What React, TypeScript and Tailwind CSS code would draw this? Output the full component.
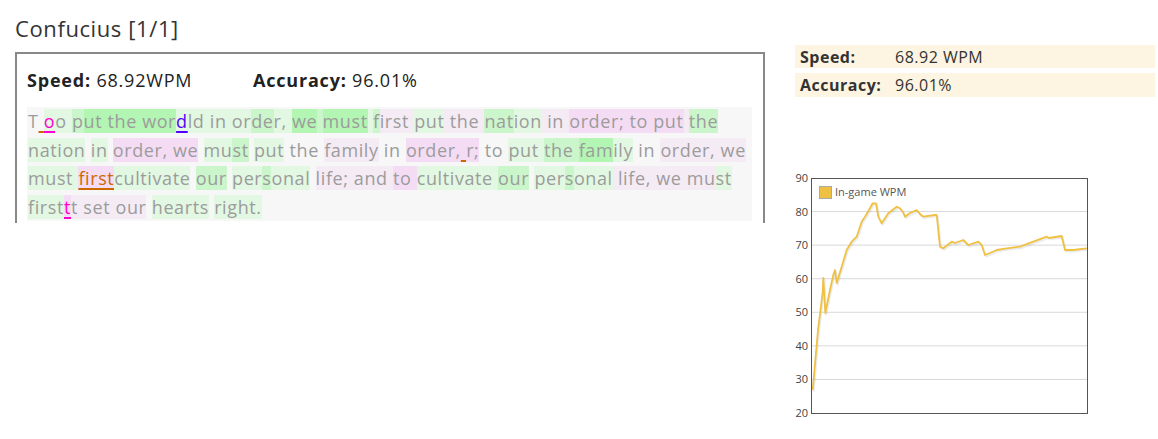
import React from "react";

type Seg = [string, string, string?];

const BG: Record<string, string> = {
  ".": "",
  G: "bg-[#b3f5b3]",
  g: "bg-[#cbf6cb]",
  l: "bg-[#e2f8e2]",
  p: "bg-[#f5dcf5]",
  q: "bg-[#f5ebf5]",
};

const SPECIAL: Record<string, string> = {
  orange: "text-[#cc6a00] underline decoration-2 underline-offset-[3px] decoration-[#cc6a00]",
  magenta: "text-[#ff00cc] underline decoration-2 underline-offset-[3px] decoration-[#ff00cc]",
  blue: "text-[#5500ff] underline decoration-2 underline-offset-[3px] decoration-[#5500ff]",
};

const lines: Seg[][] = [
  [
    ["T", "."],
    [" ", ".", "orange"],
    ["o", "l", "magenta"],
    ["o ", "l"],
    ["p", "g"],
    ["ut the wor", "G"],
    ["d", "l", "blue"],
    ["ld in ", "l"],
    ["or", "l"],
    ["de", "g"],
    ["r, ", "l"],
    ["we", "G"],
    [" ", "g"],
    ["must", "G"],
    [" ", "l"],
    ["f", "g"],
    ["irst ", "q"],
    ["put", "l"],
    [" the ", "q"],
    ["nat", "g"],
    ["ion", "l"],
    [" in ", "q"],
    ["order; to put", "p"],
    [" ", "q"],
    ["the", "g"],
  ],
  [
    ["nation", "l"],
    [" ", "."],
    ["in", "l"],
    [" ", "."],
    ["order, we", "p"],
    [" ", "."],
    ["mu", "l"],
    ["st", "g"],
    [" ", "."],
    ["put", "l"],
    [" the ", "."],
    ["family", "q"],
    [" in ", "."],
    ["order,", "p"],
    [" ", "p", "orange"],
    ["r;", "p"],
    [" to ", "."],
    ["put ", "l"],
    ["the ", "g"],
    ["fam", "G"],
    ["ily", "l"],
    [" in ", "."],
    ["order, we", "q"],
  ],
  [
    ["must ", "l"],
    ["first", "p", "orange"],
    ["cultivate", "l"],
    [" ", "."],
    ["our", "g"],
    [" ", "."],
    ["per", "l"],
    ["s", "g"],
    ["onal", "l"],
    [" ", "."],
    ["life; ", "q"],
    ["and ", "q"],
    ["to ", "p"],
    ["cultivate ", "l"],
    ["our", "g"],
    [" ", "."],
    ["per", "l"],
    ["s", "g"],
    ["onal", "l"],
    [" life, we mu", "q"],
    ["st", "l"],
  ],
  [
    ["first", "l"],
    ["t", "p", "magenta"],
    ["t set our", "q"],
    [" ", "."],
    ["hearts", "l"],
    [" ", "."],
    ["right.", "l"],
  ],
];

const pts: [number, number][] = [
  [812.7, 390], [818, 330], [822.7, 292], [823.3, 278], [825.3, 313], [830, 290],
  [833.3, 275], [835, 270], [836.7, 283], [841.7, 266.7], [846.7, 250], [851.7, 241.7],
  [856.7, 236.7], [861.7, 221.7], [865, 216.7], [870, 208.3], [872.7, 203.3], [876, 203.3],
  [878.3, 216.7], [881.7, 223.3], [888.3, 213.3], [896.7, 206.7], [900, 208.3], [903, 212],
  [905, 216.7], [910, 213], [916.7, 210], [920, 214], [923.3, 216.7], [935, 215], [936.7, 215],
  [940, 246.7], [943.3, 248.3], [951.7, 241.7], [955, 243], [963.3, 240], [968.3, 245],
  [978.3, 241.7], [981.7, 245], [985, 255], [990, 253], [996.7, 250], [1006.7, 248.3],
  [1020, 246.7], [1033.3, 241.7], [1046.7, 236.7], [1049, 238], [1061.7, 236], [1065, 250],
  [1073.3, 250], [1086.7, 248.3],
];

function Chart() {
  const ox = 790;
  const oy = 170;
  const d = pts.map(([x, y]) => `${(x - ox).toFixed(1)},${(y - oy).toFixed(1)}`).join(" ");
  const ds = pts.map(([x, y]) => `${(x - ox + 1).toFixed(1)},${(y - oy + 1.5).toFixed(1)}`).join(" ");
  const labels = [90, 80, 70, 60, 50, 40, 30, 20];
  const yOf = (v: number) => 243 - (v - 20) * (235 / 70);
  return (
    <svg width="300" height="260" viewBox="0 0 300 260" className="block">
      {labels.map((v) => (
        <g key={v}>
          {v !== 90 && v !== 20 && (
            <line x1="21" x2="297" y1={yOf(v)} y2={yOf(v)} stroke="#d9d9d9" strokeWidth="1" />
          )}
          <text
            x="18"
            y={yOf(v) + 4}
            textAnchor="end"
            fontSize="11"
            fill="#444"
            fontFamily="'Open Sans', sans-serif"
          >
            {v}
          </text>
        </g>
      ))}
      <polyline points={ds} fill="none" stroke="#000" strokeOpacity="0.08" strokeWidth="2" strokeLinejoin="round" />
      <polyline points={d} fill="none" stroke="#efc143" strokeWidth="1.8" strokeLinejoin="round" />
      <rect x="21.5" y="8.5" width="276" height="235" fill="none" stroke="#555" strokeWidth="1" />
      <rect x="29.5" y="16.5" width="12" height="12" fill="#efc143" stroke="#aaa" strokeWidth="1" />
      <text x="45" y="26" fontSize="11" fill="#555" fontFamily="'Open Sans', sans-serif">
        In-game WPM
      </text>
    </svg>
  );
}

export default function App() {
  return (
    <div className="flex pl-[15px] font-['Open_Sans',sans-serif] bg-white w-[1158px] h-[439px]">
      <div className="w-[750px] flex flex-col">
        <div className="h-[52px] pt-[13px] text-[22px] leading-[30px] tracking-[0.6px] text-[#333]">Confucius [1/1]</div>
        <div className="border-t-2 border-l-2 border-r-2 border-[#888] h-[171px] pl-[10px] pr-[10px]">
          <div className="h-[53px] flex items-center text-[18px] tracking-[0.8px] text-[#222]">
            <span className="w-[226px]">
              <b>Speed:</b> 68.92WPM
            </span>
            <span>
              <b>Accuracy:</b> 96.01%
            </span>
          </div>
          <div className="bg-[#f7f7f7] w-[725px] pl-[1px] text-[18px] leading-[28.5px] tracking-[0.6px] text-[#9c9c9c] whitespace-pre">
            {lines.map((line, i) => (
              <div key={i}>
                {line.map(([t, c, s], j) => (
                  <span key={j} className={`${BG[c]} ${s ? SPECIAL[s] : ""}`}>
                    {t}
                  </span>
                ))}
              </div>
            ))}
          </div>
        </div>
      </div>
      <div className="ml-[30px] w-[360px] pt-[45px] flex flex-col">
        <div className="flex flex-col gap-[5px] text-[16px] tracking-[0.5px] text-[#333]">
          <div className="bg-[#fdf5e2] h-[23px] flex items-center pl-[5px]">
            <b className="w-[95px]">Speed:</b>
            <span>68.92 WPM</span>
          </div>
          <div className="bg-[#fdf5e2] h-[24px] flex items-center pl-[5px]">
            <b className="w-[95px]">Accuracy:</b>
            <span>96.01%</span>
          </div>
        </div>
        <div className="mt-[73px] -ml-[5px]">
          <Chart />
        </div>
      </div>
    </div>
  );
}
